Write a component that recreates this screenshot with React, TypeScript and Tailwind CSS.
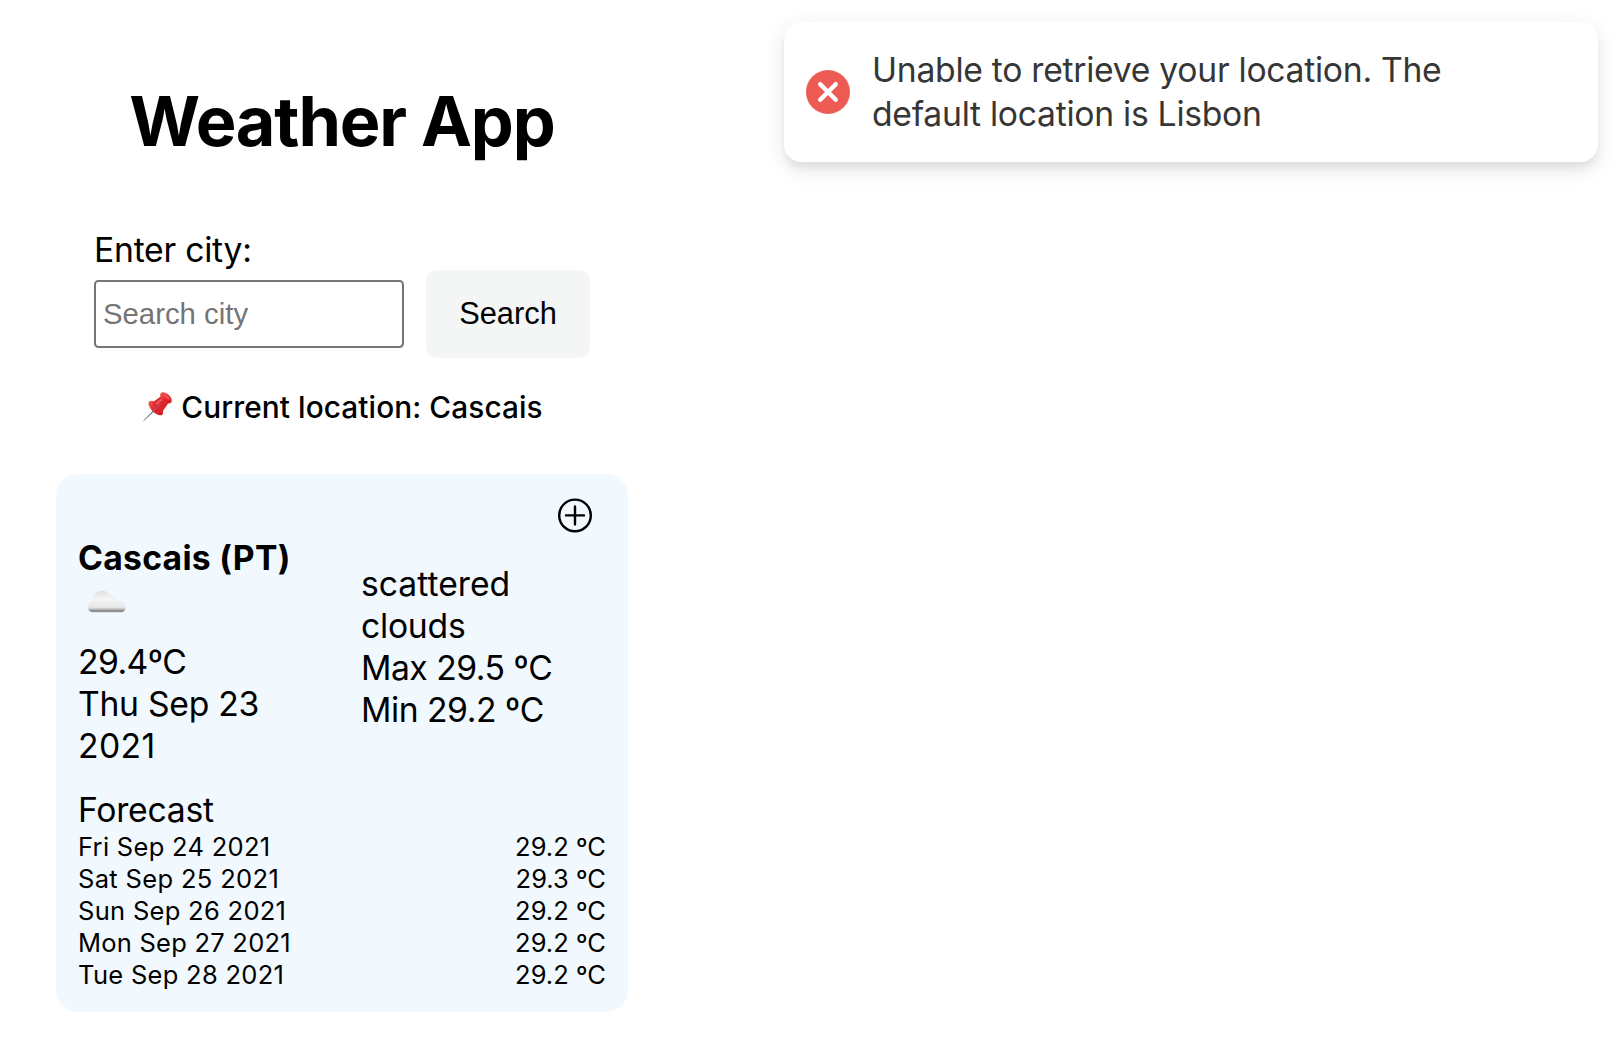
import React from "react";

const forecast = [
  { day: "Fri Sep 24 2021", temp: "29.2 ºC", tracking: "tracking-[0.3px]" },
  { day: "Sat Sep 25 2021", temp: "29.3 ºC", tracking: "tracking-[0.34px]" },
  { day: "Sun Sep 26 2021", temp: "29.2 ºC", tracking: "tracking-[0.3px]" },
  { day: "Mon Sep 27 2021", temp: "29.2 ºC", tracking: "tracking-[0.24px]" },
  { day: "Tue Sep 28 2021", temp: "29.2 ºC", tracking: "tracking-[0.3px]" },
];

function PinIcon() {
  return (
    <svg width="30" height="31" viewBox="0 0 30 31" className="shrink-0">
      <defs>
        <linearGradient id="pinRed" x1="0" y1="0" x2="1" y2="1">
          <stop offset="0" stopColor="#f4605c" />
          <stop offset="0.5" stopColor="#e4282d" />
          <stop offset="1" stopColor="#cc1c22" />
        </linearGradient>
      </defs>
      <path d="M0.8 29.6 L11.4 17.4 L13.2 19.2 Z" fill="#a3b4c0" />
      <path d="M0.8 29.6 L12 18.6" stroke="#667d90" strokeWidth="1" strokeLinecap="round" />
      <path d="M6 10.6 C7.6 9 10.6 9.6 13.9 12.6 C18.3 16.6 21.4 21 19.6 23.4 C17.8 25.4 13.2 23.6 9.8 20.4 C6.4 17.2 4.6 12.6 6 10.6Z" fill="url(#pinRed)" />
      <path d="M9.4 11.4 L18.4 5 L25.6 11.8 L19.6 20.4 C16 19.8 10.4 15.4 9.4 11.4Z" fill="#dc262b" />
      <path d="M12 12 L19.2 6.8 L20.8 8.4 L14 14Z" fill="#f0605d" opacity="0.75" />
      <path d="M17.6 2.2 C19 0.3 22.8 1.2 25.8 4 C28.8 6.8 29.6 10.4 27.8 11.8 C26 13.2 22.6 11.9 20 9.6 C17.6 7.2 16.4 4.2 17.6 2.2Z" fill="url(#pinRed)" />
      <path d="M19.8 2.8 C21.2 2 24 3.4 25.6 5.2 C27 6.8 27.4 8.2 26.4 8.8 C24.8 9.4 18.6 4.4 19.8 2.8Z" fill="#ee4d4c" />
      <path d="M9.6 20.6 L17.4 12.6" stroke="#96657a" strokeWidth="1.3" opacity="0.75" />
    </svg>
  );
}

function CloudIcon() {
  return (
    <svg width="40" height="24" viewBox="0 0 40 24">
      <defs>
        <linearGradient id="cloudFill" x1="0" y1="0" x2="0" y2="24" gradientUnits="userSpaceOnUse">
          <stop offset="0" stopColor="#dcdcde" />
          <stop offset="0.35" stopColor="#f5f5f5" />
          <stop offset="0.72" stopColor="#e8e8e8" />
          <stop offset="0.8" stopColor="#c0c0c0" />
          <stop offset="0.87" stopColor="#808080" />
          <stop offset="0.95" stopColor="#a0a0a0" />
        </linearGradient>
      </defs>
      <path
        d="M6.4 22.2 C3 22.2 1 20 1 17.4 C1 14.4 3 12 6 11.4 C5.6 5.8 9.6 1 15 1 C18.6 1 21.4 2.9 22.6 6 C26.2 5 29.2 7.4 29.6 11.8 C34.4 11 38.8 13.2 38.8 17.2 C38.8 20.2 36.6 22.2 33.6 22.2 Z"
        fill="url(#cloudFill)"
        stroke="#dedee0"
        strokeOpacity="0.5"
        strokeWidth="0.7"
      />
    </svg>
  );
}

function Toast() {
  return (
    <div className="absolute top-[22px] right-6 flex h-[140px] w-[814px] items-center rounded-[17.6px] bg-white pl-[22px] text-[33.7px] leading-[44px] text-[#363636] shadow-[0_6.6px_22px_rgba(0,0,0,0.1),0_6.6px_6.6px_rgba(0,0,0,0.05)]">
      <svg width="44" height="44" viewBox="0 0 44 44" className="shrink-0">
        <circle cx="22" cy="22" r="22" fill="#ee5b55" />
        <path d="M14.2 14.2 L29.8 29.8 M29.8 14.2 L14.2 29.8" stroke="#fff" strokeWidth="4.4" strokeLinecap="round" />
      </svg>
      <p className="ml-[22px] whitespace-nowrap tracking-[-0.28px]">
        Unable to retrieve your location. The
        <br />
        default location is Lisbon
      </p>
    </div>
  );
}

export default function App() {
  return (
    <div className="relative h-[1062px] w-full overflow-hidden bg-white font-['Inter',sans-serif] text-black">
      <main className="ml-14 w-[572px] pt-[81px]">
        <h1 className="text-center text-[68.3px] leading-[80px] font-bold tracking-[-1.15px]">Weather App</h1>

        <form className="mt-[68px] ml-[38px]" onSubmit={(e) => e.preventDefault()}>
          <label htmlFor="city" className="block h-[41px] text-[33.7px] leading-[42px] tracking-[-0.25px]">
            Enter city:
          </label>
          <div className="flex items-center gap-[22px]">
            <input
              id="city"
              placeholder="Search city"
              className="h-[68px] w-[310px] rounded-[4.4px] border-2 border-[#767676] bg-white px-[7px] font-['Liberation_Sans',sans-serif] text-[29.33px] placeholder:text-[#757575]"
            />
            <button className="h-[88px] w-[164px] rounded-[11px] bg-[#f4f6f6] font-['Liberation_Sans',sans-serif] text-[30.8px]">
              Search
            </button>
          </div>
        </form>

        <p className="mt-7 flex h-[42px] items-center justify-center pl-0.5 text-[29.8px] leading-[42px] font-medium tracking-[0.08px]">
          <span className="mr-2 flex h-[42px] items-start pt-[5px]">
            <PinIcon />
          </span>
          Current location: Cascais
        </p>

        <section className="mt-[46px] h-[538px] rounded-[22px] bg-[#f1f8fe] px-[22px] pt-6">
          <div className="flex h-[39px] justify-end pr-[14px]">
            <svg width="34" height="35" viewBox="0 0 34 35" fill="none" stroke="#000" strokeWidth="2.4" strokeLinecap="round">
              <circle cx="17" cy="17.4" r="15.8" />
              <path d="M17 8.4v18M8 17.4h18" />
            </svg>
          </div>

          <div className="grid grid-cols-[283px_1fr] text-[33.7px] leading-[42px]">
            <div>
              <h2 className="font-bold tracking-[0.28px]">Cascais (PT)</h2>
              <div className="flex h-[62px] pt-[11px] pl-[9px]">
                <CloudIcon />
              </div>
              <p className="tracking-[-0.6px]">29.4ºC</p>
              <p className="tracking-[-0.28px]">Thu Sep 23</p>
              <p className="tracking-[0.4px]">2021</p>
            </div>
            <div className="pt-[26px]">
              <p>scattered</p>
              <p className="tracking-[-0.25px]">clouds</p>
              <p className="tracking-[-0.5px]">Max 29.5 ºC</p>
              <p className="tracking-[-0.48px]">Min 29.2 ºC</p>
            </div>
          </div>

          <h3 className="mt-[22px] text-[33.7px] leading-[42px] tracking-[-0.27px]">Forecast</h3>
          <ul className="text-[25.5px] leading-8">
            {forecast.map((f) => (
              <li key={f.day} className="flex justify-between">
                <span className={f.tracking}>{f.day}</span>
                <span>{f.temp}</span>
              </li>
            ))}
          </ul>
        </section>
      </main>
      <Toast />
    </div>
  );
}
